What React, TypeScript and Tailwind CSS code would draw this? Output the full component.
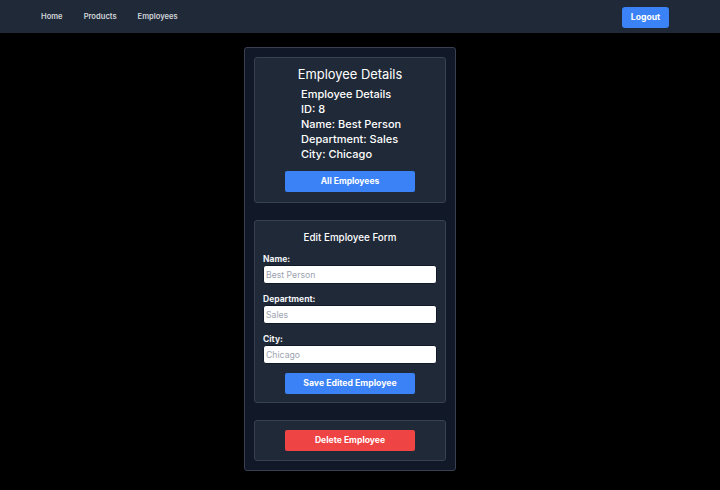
import React from 'react';

function Field({ label, value }: { label: string; value: string }) {
    return (
        <div className="flex flex-col">
            <label className="text-[8.5px] font-bold text-gray-100 leading-[12px]">{label}</label>
            <input
                className="h-[19px] w-full rounded-[3px] bg-white border border-[#111827] px-[2px] text-[8.7px] text-gray-900 placeholder:text-[#9ca3af] outline-none"
                placeholder={value}
            />
        </div>
    );
}

export default function App() {
    return (
        <div className="min-h-[490px] bg-black text-white" style={{ fontFamily: 'Inter, "Noto Sans", sans-serif' }}>
            <nav className="bg-[#1f2937] h-[33px] flex items-center justify-between pl-[41px] pr-[51px]">
                <div className="flex items-center gap-[21px] text-[7.6px] font-semibold text-[#d1d5db]">
                    <a>Home</a>
                    <a>Products</a>
                    <a>Employees</a>
                </div>
                <button className="bg-[#3b82f6] text-white text-[8.6px] font-bold rounded-[3px] w-[47px] h-[21px] mt-[2px]">
                    Logout
                </button>
            </nav>

            <main className="flex justify-center pt-[14px] pr-[20px]">
                <div className="w-[212px] bg-[#111827] border border-[#374151] rounded-[3px] p-[9px] flex flex-col gap-[17px]">
                    <section className="bg-[#1f2937] border border-[#374151] rounded-[3px] px-[9px] pt-[8px] pb-[10px] flex flex-col items-center">
                        <h2 className="text-[12.9px] leading-[18px]">Employee Details</h2>
                        <div className="mt-[3px] text-[11px] font-medium leading-[15px] self-start ml-[37px]">
                            <p>Employee Details</p>
                            <p>ID: 8</p>
                            <p>Name: Best Person</p>
                            <p>Department: Sales</p>
                            <p>City: Chicago</p>
                        </div>
                        <button className="mt-[9px] w-[130px] h-[21px] bg-[#3b82f6] rounded-[2px] text-[8.5px] font-bold">
                            All Employees
                        </button>
                    </section>

                    <section className="bg-[#1f2937] border border-[#374151] rounded-[3px] px-[8px] pt-[10px] pb-[8px] flex flex-col">
                        <h3 className="text-center text-[9.8px] font-medium leading-[14px] mb-[8px]">Edit Employee Form</h3>
                        <div className="flex flex-col gap-[9px]">
                            <Field label="Name:" value="Best Person" />
                            <Field label="Department:" value="Sales" />
                            <Field label="City:" value="Chicago" />
                        </div>
                        <button className="mt-[9px] self-center w-[130px] h-[21px] bg-[#3b82f6] rounded-[2px] text-[8.7px] font-bold">
                            Save Edited Employee
                        </button>
                    </section>

                    <section className="bg-[#1f2937] border border-[#374151] rounded-[3px] py-[9px] flex justify-center">
                        <button className="w-[130px] h-[21px] bg-[#ef4444] rounded-[2px] text-[8.6px] font-bold">
                            Delete Employee
                        </button>
                    </section>
                </div>
            </main>
        </div>
    );
}
